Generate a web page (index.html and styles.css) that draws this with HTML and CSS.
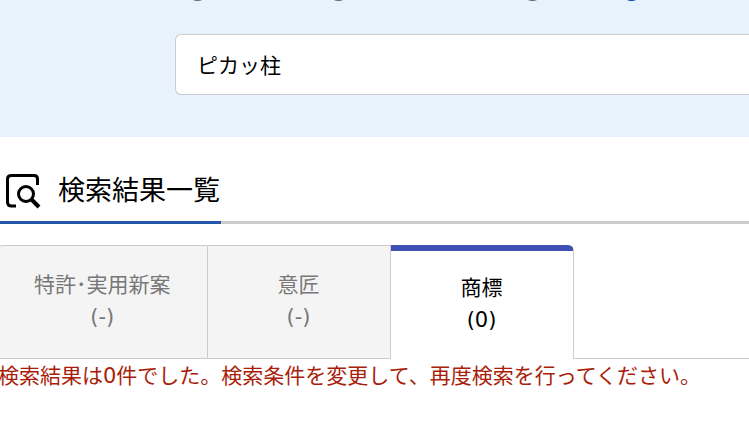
FILE: index.html
```html
<!DOCTYPE html>
<html lang="ja">
<head>
  <meta charset="UTF-8">
  <meta name="viewport" content="width=device-width, initial-scale=1.0">
  <title>検索結果一覧</title>
  <link rel="stylesheet" href="styles.css">
</head>
<body>
  <form class="search-panel">
    <div class="search-types">
      <label><input type="radio" name="type">四法全て</label>
      <label><input type="radio" name="type">特許･実用新案</label>
      <label><input type="radio" name="type">意匠</label>
      <label><input type="radio" name="type" checked>商標</label>
    </div>
    <input class="keyword" type="text" name="keyword" value="ピカッ柱" aria-label="キーワード">
  </form>

  <main class="results">
    <div class="results-header">
      <h2>
        <svg class="icon" viewBox="0 0 36 36" width="36" height="36" fill="none" stroke="#000" aria-hidden="true">
          <path d="M11 33H6.500Q2.500 33 2.500 29V6Q2.500 2.500 6.500 2.500H29Q32.500 2.500 32.500 6V12" stroke-width="3"/>
          <circle cx="21" cy="21" r="7.500" stroke-width="3"/>
          <path d="M26.500 26.500L34 34" stroke-width="4"/>
        </svg>
        検索結果一覧
      </h2>
    </div>

    <div class="tabs" role="tablist">
      <button class="tab" type="button" role="tab">特許･実用新案<br>(-)</button>
      <button class="tab" type="button" role="tab">意匠<br>(-)</button>
      <button class="tab active" type="button" role="tab" aria-selected="true">商標<br>(0)</button>
    </div>

    <p class="message">検索結果は0件でした。検索条件を変更して、再度検索を行ってください。</p>
  </main>
</body>
</html>
```

FILE: styles.css
```css
* {
  box-sizing: border-box;
}
body {
  margin: 0;
  font-family: "DejaVu Sans", "Noto Sans CJK JP", sans-serif;
  font-size: 21px;
  line-height: 32px;
  color: #000;
  background-color: #fff;
  overflow-x: hidden;
}
.search-panel {
  padding: 0 0 42px 175px;
  background-color: #e7f2fc;
  overflow: hidden;
}
.search-types {
  display: flex;
  gap: 28px;
  margin-top: -27px;
  padding: 0 12px 29px;
  white-space: nowrap;
}
.search-types label {
  display: flex;
  align-items: flex-end;
  height: 32px;
  line-height: 26px;
  padding-bottom: 4px;
}
.search-types input {
  appearance: none;
  flex-shrink: 0;
  width: 21px;
  height: 21px;
  margin: 0 8px 0 0;
  border: 2px solid #666;
  border-radius: 50%;
  background-color: #fff;
}
.search-types input:checked {
  border-color: #0d47a1;
}
.keyword {
  display: block;
  width: 100%;
  height: 61px;
  padding: 0 21px 2px;
  border: 1px solid #ccc;
  border-right: none;
  border-radius: 6px 0 0 6px;
  background-color: #fff;
  color: #000;
  font: inherit;
}
.results {
  margin-left: -3px;
}
.results-header {
  margin-top: 29px;
  border-bottom: 3px solid #ccc;
}
.results-header h2 {
  display: flex;
  align-items: center;
  gap: 17px;
  width: fit-content;
  margin: 0 0 -3px;
  padding: 0 1px 5px 8px;
  border-bottom: 3px solid #2457a7;
  font-size: 27px;
  font-weight: 400;
  line-height: 50px;
}
.tabs {
  display: flex;
  margin-top: 21px;
}
.tabs::after {
  content: "";
  flex: 1;
  border-bottom: 1px solid #ccc;
}
.tab {
  min-width: 183px;
  height: 114px;
  padding: 0 36px 2px;
  border: 1px solid #ccc;
  border-left: none;
  background-color: #f4f4f4;
  color: #777;
  font: inherit;
  line-height: 32px;
  cursor: pointer;
}
.tab:first-child {
  border-left: 1px solid #ccc;
  border-top-left-radius: 6px;
}
.tab.active {
  border-top: 6px solid #3f51b5;
  border-bottom: none;
  border-top-right-radius: 6px;
  background-color: #fff;
  color: #000;
}
.message {
  margin: 1px 0 0;
  padding-left: 1px;
  color: #a91e0b;
}
```
